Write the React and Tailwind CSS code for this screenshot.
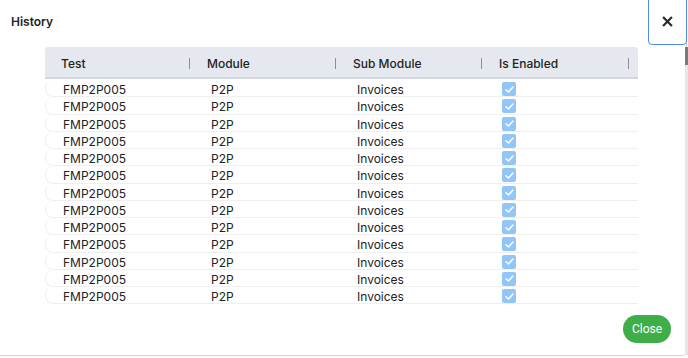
import React from "react";

const rows = Array.from({ length: 13 }, () => ({
  test: "FMP2P005",
  module: "P2P",
  sub: "Invoices",
}));

function Check() {
  return (
    <div className="w-[14px] h-[14px] rounded-[2px] bg-[#93c6f8] flex items-center justify-center">
      <svg width="11" height="11" viewBox="0 0 12 12" fill="none">
        <path d="M2.2 6.3 L4.9 8.8 L9.8 3.4" stroke="white" strokeWidth="1.6" strokeLinecap="round" strokeLinejoin="round" />
      </svg>
    </div>
  );
}

function HeadCell({ label }) {
  return (
    <div className="relative flex items-center h-full pl-[16px] pt-[3px]">
      <span>{label}</span>
      <span className="absolute right-[1px] top-[11px] w-[1.5px] h-[11px] bg-[#8a8f96]" />
    </div>
  );
}

export default function App() {
  return (
    <div
      className="relative w-[688px] h-[358px] bg-white overflow-hidden text-[#1f2328]"
      style={{ fontFamily: "Inter, 'Liberation Sans', Arial, sans-serif" }}
    >
      <div className="w-[687px] h-[356px] border-r border-b border-[#d4d4d4] rounded-br-[5px] flex flex-col">
        <div className="h-[47px] flex justify-between items-start">
          <div className="pl-[11px] pt-[13px] text-[12px] font-semibold text-[#222]">History</div>
          <div className="w-[39px] h-[47px] -mt-[2px] mr-[-1px] border-[1.5px] border-[#4f8bea] rounded-b-[4px] flex items-center justify-center">
            <svg width="11" height="11" viewBox="0 0 12 12">
              <path d="M2 2 L10 10 M10 2 L2 10" stroke="#2a2a2a" strokeWidth="2.4" strokeLinecap="square" />
            </svg>
          </div>
        </div>
        <div className="ml-[45px] w-[593px]">
          <div className="h-[32px] bg-[#e5e9ef] rounded-t-[3px] border-b-2 border-[#d3d8de] grid grid-cols-[146px_146px_146px_147px_8px] text-[12px] font-medium text-[#222]">
            <HeadCell label="Test" />
            <HeadCell label="Module" />
            <HeadCell label="Sub Module" />
            <HeadCell label="Is Enabled" />
            <div />
          </div>
          <div className="pt-[1px]">
            {rows.map((r, i) => (
              <div
                key={i}
                className="h-[17.25px] grid grid-cols-[146px_146px_146px_147px_8px] items-center text-[12px] text-[#222] border-l border-b border-[#efefef] rounded-l-[8px]"
              >
                <div className="pl-[17px] pt-[4px] leading-none">{r.test}</div>
                <div className="pl-[19px] pt-[4px] leading-none">{r.module}</div>
                <div className="pl-[19px] pt-[4px] leading-none">{r.sub}</div>
                <div className="pl-[18px] pt-[2px]">
                  <Check />
                </div>
                <div />
              </div>
            ))}
          </div>
        </div>
        <div className="flex justify-end pr-[15px] mt-[11px]">
          <button
            className="w-[48px] h-[28px] rounded-full bg-[#3eae48] text-white text-[12px]"
            style={{ fontFamily: "Roboto, 'Liberation Sans', sans-serif" }}
          >
            Close
          </button>
        </div>
      </div>
      <div className="absolute right-0 top-[47px] w-[3px] h-[18px] bg-[#7a7a7a]" />
      <div className="absolute right-0 top-[65px] w-[3px] h-[290px] bg-[#e6e6e6]" />
    </div>
  );
}
